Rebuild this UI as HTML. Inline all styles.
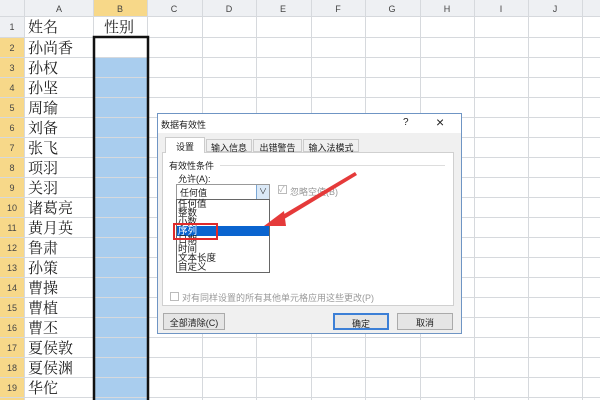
<!DOCTYPE html><html><head><meta charset="utf-8"><style>
*{margin:0;padding:0;box-sizing:border-box}
body{width:600px;height:400px;overflow:hidden;background:#fff;font-family:"Liberation Sans","Noto Sans CJK SC",sans-serif;position:relative}
.a{position:absolute}
.t{font-size:9px;color:#222;white-space:nowrap}
</style></head><body>
<svg class="a" style="left:0;top:0" width="600" height="400">
<rect x="0" y="0" width="600" height="16" fill="#eef0f3"/>
<rect x="0" y="0" width="24" height="400" fill="#eef0f3"/>
<rect x="93" y="0" width="55" height="16" fill="#f7d889"/>
<rect x="0" y="37" width="24" height="363" fill="#f7d889"/>
<rect x="94" y="57" width="54" height="343" fill="#a9cdee"/>
<g stroke="#d6d9dd" stroke-width="1">
<line x1="24.5" y1="0" x2="24.5" y2="400"/>
<line x1="93.5" y1="0" x2="93.5" y2="400"/>
<line x1="147.5" y1="0" x2="147.5" y2="400"/>
<line x1="202.5" y1="0" x2="202.5" y2="400"/>
<line x1="256.5" y1="0" x2="256.5" y2="400"/>
<line x1="311.5" y1="0" x2="311.5" y2="400"/>
<line x1="365.5" y1="0" x2="365.5" y2="400"/>
<line x1="420.5" y1="0" x2="420.5" y2="400"/>
<line x1="474.5" y1="0" x2="474.5" y2="400"/>
<line x1="528.5" y1="0" x2="528.5" y2="400"/>
<line x1="582.5" y1="0" x2="582.5" y2="400"/>
<line x1="0" y1="16.5" x2="600" y2="16.5"/>
<line x1="0" y1="37.5" x2="600" y2="37.5"/>
<line x1="0" y1="57.5" x2="600" y2="57.5"/><line x1="0" y1="77.5" x2="600" y2="77.5"/><line x1="0" y1="97.5" x2="600" y2="97.5"/><line x1="0" y1="117.5" x2="600" y2="117.5"/><line x1="0" y1="137.5" x2="600" y2="137.5"/><line x1="0" y1="157.5" x2="600" y2="157.5"/><line x1="0" y1="177.5" x2="600" y2="177.5"/><line x1="0" y1="197.5" x2="600" y2="197.5"/><line x1="0" y1="217.5" x2="600" y2="217.5"/><line x1="0" y1="237.5" x2="600" y2="237.5"/><line x1="0" y1="257.5" x2="600" y2="257.5"/><line x1="0" y1="277.5" x2="600" y2="277.5"/><line x1="0" y1="297.5" x2="600" y2="297.5"/><line x1="0" y1="317.5" x2="600" y2="317.5"/><line x1="0" y1="337.5" x2="600" y2="337.5"/><line x1="0" y1="357.5" x2="600" y2="357.5"/><line x1="0" y1="377.5" x2="600" y2="377.5"/><line x1="0" y1="397.5" x2="600" y2="397.5"/>
</g>
<rect x="94" y="37" width="54" height="370" fill="none" stroke="#111" stroke-width="2.5"/>
<g font-family="Liberation Sans" font-size="9" fill="#444" text-anchor="middle">
<text x="59" y="12">A</text><text x="120" y="12">B</text><text x="174" y="12">C</text><text x="229" y="12">D</text><text x="283" y="12">E</text><text x="338" y="12">F</text><text x="392" y="12">G</text><text x="447" y="12">H</text><text x="501" y="12">I</text><text x="555" y="12">J</text>
<text x="12" y="30">1</text><text x="12" y="51">2</text><text x="12" y="71">3</text><text x="12" y="91">4</text><text x="12" y="111">5</text><text x="12" y="131">6</text><text x="12" y="151">7</text><text x="12" y="171">8</text><text x="12" y="191">9</text><text x="12" y="211">10</text><text x="12" y="231">11</text><text x="12" y="251">12</text><text x="12" y="271">13</text><text x="12" y="291">14</text><text x="12" y="311">15</text><text x="12" y="331">16</text><text x="12" y="351">17</text><text x="12" y="371">18</text><text x="12" y="391">19</text>
</g>
<g font-family="Noto Serif CJK SC,serif" font-size="15" fill="#222">
<text x="28" y="32">姓名</text><text x="104" y="32">性别</text>
<text x="28" y="53">孙尚香</text><text x="28" y="73">孙权</text><text x="28" y="93">孙坚</text><text x="28" y="113">周瑜</text><text x="28" y="133">刘备</text><text x="28" y="153">张飞</text><text x="28" y="173">项羽</text><text x="28" y="193">关羽</text><text x="28" y="213">诸葛亮</text><text x="28" y="233">黄月英</text><text x="28" y="253">鲁肃</text><text x="28" y="273">孙策</text><text x="28" y="293">曹操</text><text x="28" y="313">曹植</text><text x="28" y="333">曹丕</text><text x="28" y="353">夏侯敦</text><text x="28" y="373">夏侯渊</text><text x="28" y="393">华佗</text>
</g>
</svg>
<div class="a" style="left:157px;top:113px;width:305px;height:221px;background:#f0f0f0;border:1px solid #6f95c4"></div>
<div class="a" style="left:158px;top:114px;width:303px;height:19px;background:#fff"></div>
<div class="a t" style="left:161px;top:118px">数据有效性</div>
<div class="a t" style="left:403px;top:117px;font-size:10px">?</div>
<div class="a t" style="left:436px;top:114px;font-size:14px">×</div>
<div class="a" style="left:162px;top:152px;width:292px;height:154px;background:#fff;border:1px solid #d0d0d0"></div>
<div class="a t" style="left:165px;top:137px;width:40px;height:16px;background:#fff;border:1px solid #ccc;border-bottom:none;text-align:center;padding-top:2px">设置</div>
<div class="a t" style="left:206px;top:139px;width:46px;height:13px;border:1px solid #ccc;text-align:center;padding-top:1px">输入信息</div>
<div class="a t" style="left:253px;top:139px;width:49px;height:13px;border:1px solid #ccc;text-align:center;padding-top:1px">出错警告</div>
<div class="a t" style="left:303px;top:139px;width:56px;height:13px;border:1px solid #ccc;text-align:center;padding-top:1px">输入法模式</div>
<div class="a t" style="left:169px;top:159px">有效性条件</div>
<div class="a" style="left:220px;top:165px;width:225px;height:1px;background:#ddd"></div>
<div class="a t" style="left:178px;top:172px">允许(A):</div>
<div class="a" style="left:176px;top:184px;width:94px;height:16px;border:1px solid #999;background:#fff"></div>
<div class="a t" style="left:180px;top:186px">任何值</div>
<div class="a" style="left:256px;top:185px;width:13px;height:14px;background:#dbe9f7;border-left:1px solid #7aa7d6;color:#333;font-size:8px;text-align:center;line-height:13px">∨</div>
<div class="a" style="left:176px;top:199px;width:94px;height:74px;border:1px solid #666;background:#fff"></div>
<div class="a" style="left:177px;top:226px;width:92px;height:10px;background:#0a64cf"></div>
<div class="a t" style="left:178px;top:200px;line-height:9px;font-size:9.5px">任何值<br>整数<br>小数<br><span style="color:#fff">序列</span><br>日期<br>时间<br>文本长度<br>自定义</div>
<div class="a" style="left:173px;top:223px;width:45px;height:17px;border:2px solid #e02a2a"></div>
<div class="a" style="left:278px;top:185px;width:9px;height:9px;border:1px solid #bbb;color:#aaa;font-size:8px;line-height:8px">✓</div>
<div class="a t" style="left:290px;top:185px;color:#999">忽略空值(B)</div>
<div class="a" style="left:170px;top:292px;width:9px;height:9px;border:1px solid #bbb;background:#fff"></div>
<div class="a t" style="left:182px;top:291px;color:#999">对有同样设置的所有其他单元格应用这些更改(P)</div>
<div class="a t" style="left:163px;top:313px;width:62px;height:17px;border:1px solid #aaa;background:#e5e5e5;text-align:center;padding-top:2px">全部清除(C)</div>
<div class="a t" style="left:333px;top:313px;width:56px;height:17px;border:2px solid #3c7fd6;background:#e5e5e5;text-align:center;padding-top:2px">确定</div>
<div class="a t" style="left:397px;top:313px;width:56px;height:17px;border:1px solid #aaa;background:#e5e5e5;text-align:center;padding-top:2px">取消</div>
<svg class="a" style="left:0;top:0" width="600" height="400">
<polygon points="355,172 274,220 276,224 357,175" fill="#e53a3a"/>
<polygon points="264,226 284,211 286,226" fill="#e53a3a"/>
</svg>
</body></html>
